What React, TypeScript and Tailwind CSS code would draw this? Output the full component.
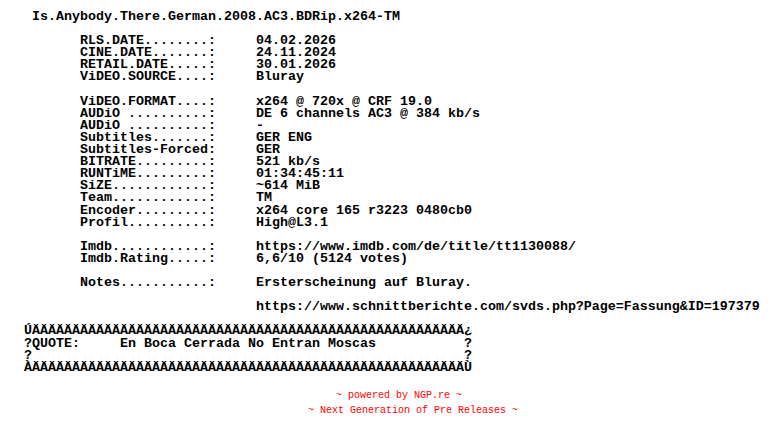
const release = "Is.Anybody.There.German.2008.AC3.BDRip.x264-TM";

const info: ([string, string] | null)[] = [
  ["RLS.DATE........:", "04.02.2026"],
  ["CINE.DATE.......:", "24.11.2024"],
  ["RETAIL.DATE.....:", "30.01.2026"],
  ["ViDEO.SOURCE....:", "Bluray"],
  null,
  ["ViDEO.FORMAT....:", "x264 @ 720x @ CRF 19.0"],
  ["AUDiO ..........:", "DE 6 channels AC3 @ 384 kb/s"],
  ["AUDiO ..........:", "-"],
  ["Subtitles.......:", "GER ENG"],
  ["Subtitles-Forced:", "GER"],
  ["BITRATE.........:", "521 kb/s"],
  ["RUNTiME.........:", "01:34:45:11"],
  ["SiZE............:", "~614 MiB"],
  ["Team............:", "TM"],
  ["Encoder.........:", "x264 core 165 r3223 0480cb0"],
  ["Profil..........:", "High@L3.1"],
  null,
  ["Imdb............:", "https://www.imdb.com/de/title/tt1130088/"],
  ["Imdb.Rating.....:", "6,6/10 (5124 votes)"],
  null,
  ["Notes...........:", "Ersterscheinung auf Bluray."],
  null,
  ["", "https://www.schnittberichte.com/svds.php?Page=Fassung&ID=197379"],
];

const bar = "Ä".repeat(54);
const quote = "En Boca Cerrada No Entran Moscas";

const nfo = [
  " " + release,
  "",
  ...info.map((row) =>
    row ? "       " + row[0].padEnd(22, " ") + row[1] : ""
  ),
  "",
  "Ú" + bar + "¿",
  "?QUOTE:     " + quote + " ".repeat(11) + "?",
  "?" + " ".repeat(54) + "?",
  "À" + bar + "Ù",
].join("\n");

export default function App() {
  return (
    <div className="min-h-screen w-full bg-white pt-[11px]">
      <pre className="pl-[24px] font-['Liberation_Mono',monospace] text-[13.333px] leading-[12.1px] font-bold text-black whitespace-pre">
        {nfo}
      </pre>
      <div className="mt-[14.5px] flex flex-col items-start font-['Liberation_Mono',monospace] text-[10px] leading-[15px] text-[#ff0000] whitespace-pre">
        <span className="ml-[336px]">~ powered by NGP.re ~</span>
        <span className="ml-[308px]">~ Next Generation of Pre Releases ~</span>
      </div>
    </div>
  );
}
